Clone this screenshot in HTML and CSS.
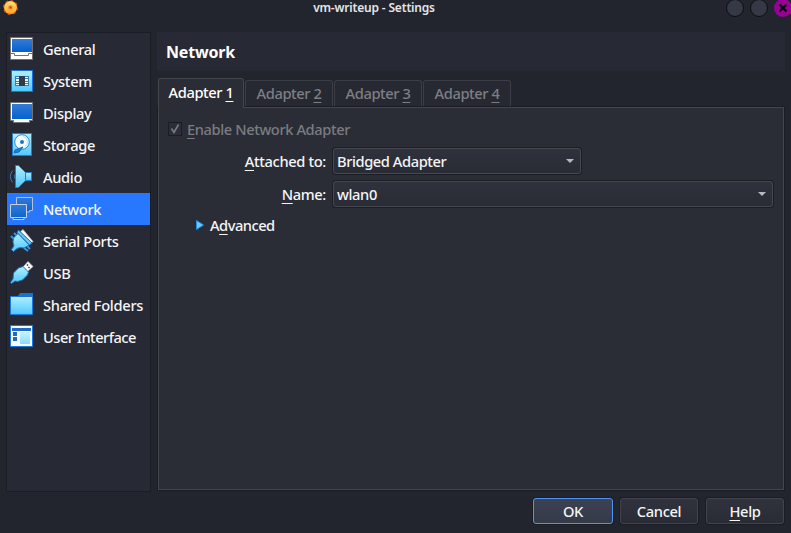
FILE: index.html
```html
<!DOCTYPE html>
<html lang="en">
<head>
<meta charset="utf-8">
<title>vm-writeup - Settings</title>
<link rel="stylesheet" href="styles.css">
</head>
<body>
<header class="titlebar">
  <svg class="app-icon" width="16" height="16" viewBox="0 0 16 16">
    <defs>
      <linearGradient id="screen" x1="0" y1="0" x2="0" y2="1"><stop offset="0" stop-color="#347bd5"/><stop offset="1" stop-color="#0560d2"/></linearGradient>
      <linearGradient id="cyan" x1="0" y1="0" x2="0" y2="1"><stop offset="0" stop-color="#b0efff"/><stop offset="1" stop-color="#50c8ff"/></linearGradient>
      <linearGradient id="gold" x1="0" y1="0" x2="0" y2="1"><stop offset="0" stop-color="#ffe26a"/><stop offset="1" stop-color="#ffa32c"/></linearGradient>
    </defs>
    <circle cx="8.500" cy="7.500" r="6.600" fill="#f09a38" stroke="#d9541a" stroke-width="1.800" stroke-dasharray="2.600 2.580"/>
    <circle cx="8.500" cy="7.500" r="6.200" fill="url(#gold)"/>
    <circle cx="8.500" cy="7.500" r="2.600" fill="#f6a02c"/><rect x="7.500" y="6.500" width="2" height="2" fill="#a64310"/>
  </svg>
  <h1 class="window-title">vm-writeup - Settings</h1>
  <div class="window-controls">
    <span class="control"></span>
    <span class="control"></span>
    <span class="control close"><svg width="18" height="18" viewBox="0 0 18 18"><path d="M5.500 5.500l7 7M12.500 5.500l-7 7" stroke="#08080c" stroke-width="2.400"/></svg></span>
  </div>
</header>
<div class="workspace">
  <nav class="sidebar">
    <a class="item"><svg class="icon" viewBox="0 0 24 24"><path d="M.5.5h22v22H.5z" fill="#fff" stroke="#747270"/><path d="M2 2h20v13H2z" fill="url(#screen)"/><path d="M1 16.500h3.500v2h14v-2H22" fill="none" stroke="#747270"/></svg>General</a>
    <a class="item"><svg class="icon" viewBox="0 0 24 24"><path d="M1.500 1.500h21v21h-21z" fill="url(#cyan)" stroke="#1672dc"/><path d="M5 7h5v10H5zM14 7h5v10h-5z" fill="#397db8"/><path d="M6 8h3v1H6zm0 2h3v2H6zm0 3h3v1H6zm0 2h3v1H6zM15 8h3v1h-3zm0 2h3v2h-3zm0 3h3v1h-3zm0 2h3v1h-3z" fill="#eaffff"/><path d="M9 7h6v10H9z" fill="#343943"/></svg>System</a>
    <a class="item"><svg class="icon" viewBox="0 0 24 24"><path d="M.5 1.500h22v18h-3v2h-16v-2h-3z" fill="#fff" stroke="#747270"/><path d="M2 3h20v15H2z" fill="url(#screen)"/></svg>Display</a>
    <a class="item"><svg class="icon" viewBox="0 0 24 24"><path d="M2.500.5h19v22h-19z" fill="url(#cyan)" stroke="#237dcc"/><circle cx="12" cy="9" r="7.300" fill="#f5feff" stroke="#2689d8"/><path d="M13 3.500a5.500 5.500 0 0 1 2 10" fill="none" stroke="#b9dff0"/><circle cx="12" cy="9" r="2" fill="#1874cb"/><path d="M13 14l-4 5-5 1 1-3z" fill="#237dd4" stroke="#156abb"/></svg>Storage</a>
    <a class="item"><svg class="icon" viewBox="0 0 24 24"><path d="M15.500 7.500h6v8h-6z" fill="url(#cyan)" stroke="#237dcc"/><path d="M5.500.5h3l7 7v8l-7 7h-3z" fill="url(#cyan)" stroke="#267ec8"/><path d="M3 5.500C-.5 9-.5 14 3 17.500M5.500 8.500q-2 3 0 6" fill="none" stroke="#3182bc"/></svg>Audio</a>
    <a class="item active"><svg class="icon" viewBox="0 0 24 24"><path d="M6.500.5h16v13h-3v1.500H6.500z" fill="url(#screen)" stroke="#b3c1dc"/><path d="M.5 7.500h16v13h-2.500v2h-11v-2H.5z" fill="url(#screen)" stroke="#c4d0e6"/><path d="M1 20.500h15" stroke="#c4d0e6"/></svg>Network</a>
    <a class="item"><svg class="icon" viewBox="0 0 24 24"><path d="M13 .5l10 12-2 2L10 3z" fill="#f7fbff" stroke="#aeb5bf" stroke-width=".7"/><path d="M1 7l4 4M14 19l4 3M4 4l4 4M16 16l4 4" stroke="#3999dd" stroke-width="2"/><path d="M8.500 1l13.500 13-2.500 2L7 3.500z" fill="#65c9f7" stroke="#1a68b8"/><path d="M8 4.500l11 11.500-5 3-4-.5-3 1-3.500 3-2-2L4 17l-1-4 .5-4z" fill="url(#cyan)" stroke="#227dc8"/></svg>Serial Ports</a>
    <a class="item"><svg class="icon" viewBox="0 0 24 24"><path d="M13 6l5-5.500 5 5-5.500 5z" fill="#fff" stroke="#b9bcc2" stroke-width=".7"/><path d="M17 3.500l1 1M19.500 6l-1 1" stroke="#333" stroke-width="1.500"/><path d="M13 5.500l5.500 5.500-1 3-5 5-5 1.500L5 20l-3.500 2.500-1-1L3 18l.5-6 5-5z" fill="url(#cyan)" stroke="#1a73c6"/></svg>USB</a>
    <a class="item folders"><svg class="icon" viewBox="0 0 24 24"><path d="M.5 3.500h22v18H.5z" fill="url(#cyan)" stroke="#1b78dc"/><path d="M8 3l2-3h13v4H8z" fill="#1b70d0"/></svg>Shared Folders</a>
    <a class="item interface"><svg class="icon" viewBox="0 0 24 24"><path d="M.5.5h22v21H.5z" fill="#f4fcff" stroke="#1b78dc"/><path d="M2 3h19v3H2zM3 7h4v4H3zm0 5h4v4H3z" fill="#2169c8"/><path d="M10 7h10v12H10z" fill="url(#cyan)" opacity=".65"/></svg>User Interface</a>
  </nav>
  <main class="content">
    <h2 class="page-title">Network</h2>
    <div class="tabs">
      <div class="tab current">Adapter <u>1</u></div>
      <div class="tab">Adapter <u>2</u></div>
      <div class="tab">Adapter <u>3</u></div>
      <div class="tab">Adapter <u>4</u></div>
    </div>
    <section class="panel">
      <div class="enable"><span class="checkbox"><svg width="12" height="12" viewBox="0 0 12 12"><path d="M2.500 5.500L5 9.500l4.500-8" fill="none" stroke="#7b7c80" stroke-width="1.600"/></svg></span><span><u>E</u>nable Network Adapter</span></div>
      <div class="field attached"><label><u>A</u>ttached to:</label><div class="select short">Bridged Adapter<span class="arrow"></span></div></div>
      <div class="field"><label><u>N</u>ame:</label><div class="select">wlan0<span class="arrow"></span></div></div>
      <div class="advanced"><svg width="8" height="10" viewBox="0 0 8 10"><path d="M.5.500l7 4.500-7 4.500z" fill="#60ceff" stroke="#258ee9"/></svg><span>A<u>d</u>vanced</span></div>
    </section>
  </main>
</div>
<footer class="actions">
  <button class="button primary">OK</button>
  <button class="button">Cancel</button>
  <button class="button"><u>H</u>elp</button>
</footer>
</body>
</html>
```
FILE: styles.css
```css
* { box-sizing: border-box; }
body {
  margin: 0;
  width: 791px;
  height: 533px;
  overflow: hidden;
  background: #23252e;
  color: #f5f5f6;
  font: 500 14.67px/20px "Noto Sans", sans-serif;
  letter-spacing: -.35px;
}
svg { display: block; flex: none; }
u { text-decoration-thickness: 1px; text-underline-offset: 3px; text-decoration-skip-ink: none; }
.titlebar {
  display: grid;
  grid-template-columns: 1fr auto 1fr;
  height: 32px;
  align-items: start;
}
.app-icon { margin-left: 2px; }
.window-title { margin: 0 0 0 -43px; font-size: 12px; line-height: 16px; font-weight: 600; color: #e4e5e8; letter-spacing: -.18px; }
.window-controls { display: flex; justify-content: flex-end; gap: 6px; margin-right: -1px; margin-top: -1px; }
.control { width: 18px; height: 18px; border: 1px solid #0c0e12; border-radius: 50%; background: #353945; }
.control.close { border: 0; background: #980098; }
.workspace { display: flex; height: 458px; padding: 0 6px; gap: 6px; }
.sidebar { width: 145px; height: 460px; flex: none; border: 1px solid #1b1d24; background: #272934; }
.item { display: flex; align-items: center; height: 32px; padding-left: 3px; gap: 9px; white-space: nowrap; }
.item.active { background: #2777ff; }
.folders { letter-spacing: -.3px; }
.interface { letter-spacing: -.52px; }
.icon { width: 24px; height: 24px; }
.content { display: flex; flex-direction: column; flex: 1; min-width: 0; }
.page-title { height: 39px; margin: 0 0 7px; padding-left: 9px; font-size: 16px; line-height: 41px; font-weight: 700; letter-spacing: -.2px; background: #272934; color: #fff; }
.tabs { display: flex; align-items: flex-end; height: 29px; gap: 1px; padding-left: 1px; flex: none; }
.tab {
  height: 27px;
  width: 88px;
  border: 1px solid #3b3e46;
  border-bottom: 0;
  border-radius: 3px 3px 0 0;
  text-align: center;
  line-height: 25px;
  letter-spacing: -.42px;
  color: #7e7f82;
  background: #262932;
}
.tab.current { width: 86px; height: 30px; margin-bottom: -1px; line-height: 27px; color: #fff; background: #2a2d36; border-color: #43464e; z-index: 1; }
.panel { flex: 1; margin-left: 1px; width: 626px; border: 1px solid #43464e; box-shadow: 0 0 0 1px #1b1d24; background: #2a2d36; padding: 11px 9px; }
.enable { display: flex; align-items: center; gap: 5px; height: 20px; color: #7b7c80; letter-spacing: -.4px; }
.checkbox { width: 14px; height: 14px; border: 1px solid #1b1d24; background: #2b2d38; }
.field { display: flex; align-items: center; gap: 7px; height: 26px; margin-bottom: 7px; }
.field label { width: 158px; text-align: right; }
.attached { margin-top: 9px; }
.select {
  display: flex;
  align-items: center;
  justify-content: space-between;
  width: 440px;
  height: 26px;
  padding: 0 6px 0 3px;
  border: 1px solid #45484f;
  border-radius: 3px;
  background: linear-gradient(#2f323c, #292c35);
  box-shadow: 0 0 0 1px #1b1d24;
}
.select.short { width: 248px; letter-spacing: -.42px; }
.arrow { border: 4px solid transparent; border-top-color: #b8b9bd; border-bottom: 0; }
.advanced { display: flex; align-items: center; gap: 6px; height: 20px; padding-left: 28px; margin-top: 8px; letter-spacing: -.5px; }
.actions { display: flex; justify-content: flex-end; gap: 8px; padding: 8px 7px 0 0; }
.button {
  width: 78px;
  height: 26px;
  padding: 0;
  border: 1px solid #41444c;
  border-radius: 3px;
  background: linear-gradient(#30333d, #292c35);
  box-shadow: 0 0 0 1px #1b1d24;
  color: #f5f5f6;
  font: inherit;
  letter-spacing: inherit;
}
.primary { width: 80px; margin-right: -1px; border-color: #5294f5; background: linear-gradient(#3c4251, #343a48); }
```
